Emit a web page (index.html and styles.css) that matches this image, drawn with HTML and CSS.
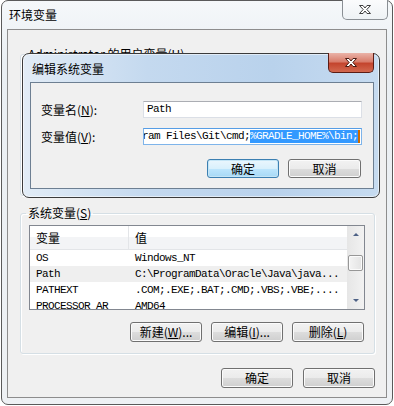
FILE: index.html
```html
<!DOCTYPE html>
<html>
<head>
    <title>环境变量</title>
    <link rel="stylesheet" href="styles.css">
</head>
<body>
    <div class="window">
        <div class="titlebar">
            <span class="title">环境变量</span>
        </div>
        <div class="close close-outer">
            <svg width="12" height="9" viewBox="0 0 12 9"><path d="M0.5 0.5H4L6 3L8 0.5H11.5L7.8 4.5L11.5 8.5H8L6 6L4 8.5H0.5L4.2 4.5Z" fill="#fff" stroke="#404040" stroke-width="1" stroke-linejoin="round"/></svg>
        </div>

        <div class="client">
            <fieldset class="group user-group">
                <legend>Administrator 的用户变量(<u>U</u>)</legend>
            </fieldset>

            <fieldset class="group sys-group">
                <legend>系统变量(<u>S</u>)</legend>
                <div class="listview">
                    <div class="list-main">
                        <div class="list-head">
                            <div class="col1">变量</div>
                            <div class="col2">值</div>
                        </div>
                        <div class="row">
                            <div class="col1">OS</div>
                            <div class="col2">Windows_NT</div>
                        </div>
                        <div class="row selected">
                            <div class="col1">Path</div>
                            <div class="col2">C:\ProgramData\Oracle\Java\java...</div>
                        </div>
                        <div class="row">
                            <div class="col1">PATHEXT</div>
                            <div class="col2">.COM;.EXE;.BAT;.CMD;.VBS;.VBE;....</div>
                        </div>
                        <div class="row">
                            <div class="col1">PROCESSOR_AR</div>
                            <div class="col2">AMD64</div>
                        </div>
                    </div>
                    <div class="vscroll">
                        <div class="sb-btn"><span class="arrow-up"></span></div>
                        <div class="sb-thumb"></div>
                        <div class="sb-btn sb-down"><span class="arrow-down"></span></div>
                    </div>
                </div>
                <div class="btn-row group-buttons">
                    <button class="btn">新建(<u>W</u>)...</button>
                    <button class="btn">编辑(<u>I</u>)...</button>
                    <button class="btn">删除(<u>L</u>)</button>
                </div>
            </fieldset>

            <div class="btn-row main-buttons">
                <button class="btn">确定</button>
                <button class="btn">取消</button>
            </div>
        </div>

        <div class="dialog">
            <div class="dialog-title">编辑系统变量</div>
            <div class="close close-red">
                <svg width="12" height="9" viewBox="0 0 12 9"><path d="M0.5 0.5H4L6 3L8 0.5H11.5L7.8 4.5L11.5 8.5H8L6 6L4 8.5H0.5L4.2 4.5Z" fill="#fff" stroke="#4a1a12" stroke-width="1" stroke-linejoin="round"/></svg>
            </div>
            <div class="dialog-client">
                <div class="field">
                    <label class="field-label">变量名(<u>N</u>):</label>
                    <div class="textbox">
                        <span class="mono">Path</span>
                    </div>
                </div>
                <div class="field">
                    <label class="field-label">变量值(<u>V</u>):</label>
                    <div class="textbox focused">
                        <span class="mono">C:\Program Files\Git\cmd;</span><span class="mono sel">%GRADLE_HOME%\bin;</span><span class="caret"></span>
                    </div>
                </div>
                <div class="btn-row dialog-buttons">
                    <button class="btn default">确定</button>
                    <button class="btn">取消</button>
                </div>
            </div>
        </div>
    </div>
</body>
</html>
```

FILE: styles.css
```css
body {
    margin: 0;
    background: #fff;
    font-family: "Noto Sans CJK SC", "Liberation Sans", sans-serif;
    font-size: 12px;
    color: #000;
}

u {
    text-decoration: underline;
}

.window {
    position: relative;
    box-sizing: border-box;
    width: 392px;
    height: 405px;
    margin-left: 1px;
    padding: 0 5px 6px;
    border: 1px solid #5a5a5a;
    border-radius: 7px;
    background: linear-gradient(#f5f8fa, #eaeff3 60px, #eef1f4);
    display: flex;
    flex-direction: column;
}

.titlebar {
    height: 28px;
    display: flex;
    align-items: center;
}

.title {
    padding-left: 2px;
    line-height: 14px;
}

.close {
    position: absolute;
    box-sizing: border-box;
    width: 46px;
    height: 20px;
    display: flex;
    align-items: center;
    justify-content: center;
    border-radius: 0 0 5px 5px;
}

.close-outer {
    top: -1px;
    right: 4px;
    border: 1px solid #8a8f94;
    border-top: none;
    background: linear-gradient(#fbfcfd, #eef2f5);
}

.close-red {
    top: -1px;
    right: 5px;
    border: 1px solid #5b1c14;
    border-top: none;
    background: linear-gradient(#eab3a8, #d97d6c 45%, #c4452e 55%, #d2684f);
}

.client {
    flex: 1;
    border: 1px solid #8d8d8d;
    background: #f0f0f0;
    padding: 16px 11px 9px 12px;
    display: flex;
    flex-direction: column;
}

.group {
    margin: 0;
    padding: 4px 8px 11px;
    min-width: 0;
    border: 1px solid #d5dfe5;
    border-radius: 3px;
    box-shadow: inset 1px 1px 0 #fff, 1px 1px 0 #fff;
}

.group legend {
    margin-left: -3px;
    padding: 0 2px;
    line-height: 16px;
}

.user-group {
    box-sizing: border-box;
    height: 150px;
    margin-bottom: 9px;
}

.listview {
    box-sizing: border-box;
    width: 336px;
    height: 85px;
    border: 1px solid #828790;
    background: #fff;
    display: flex;
}

.list-main {
    flex: 1;
    overflow: hidden;
}

.list-head {
    display: flex;
    height: 23px;
    align-items: center;
    background: linear-gradient(#fff 0, #fff 50%, #f3f4f6 50%, #f3f4f6 100%);
    border-bottom: 1px solid #e3e5e8;
}

.list-head .col1 {
    align-self: stretch;
    display: flex;
    align-items: center;
    border-right: 1px solid #e3e5e8;
}

.col1 {
    box-sizing: border-box;
    width: 99px;
    padding-left: 6px;
    flex-shrink: 0;
}

.col2 {
    padding-left: 6px;
    white-space: nowrap;
}

.row {
    display: flex;
    height: 16px;
    line-height: 16px;
    font-family: "Liberation Mono", monospace;
    font-size: 11px;
    letter-spacing: -0.6px;
}

.row.selected {
    background: #efefef;
}

.vscroll {
    width: 17px;
    display: flex;
    flex-direction: column;
    background: linear-gradient(90deg, #e6e6e6, #f2f2f2);
}

.sb-btn {
    height: 17px;
    display: flex;
    align-items: center;
    justify-content: center;
}

.sb-down {
    margin-top: auto;
}

.arrow-up,
.arrow-down {
    width: 0;
    height: 0;
    border-left: 3px solid transparent;
    border-right: 3px solid transparent;
}

.arrow-up {
    border-bottom: 3px solid #4d6185;
}

.arrow-down {
    border-top: 3px solid #4d6185;
}

.sb-thumb {
    box-sizing: border-box;
    height: 16px;
    margin: 12px 1px 0;
    border: 1px solid #979797;
    border-radius: 2px;
    background: linear-gradient(90deg, #f4f4f4, #e3e3e3);
    box-shadow: inset 0 0 0 1px #fbfbfb;
}

.btn-row {
    display: flex;
    justify-content: flex-end;
    gap: 9px;
}

.group-buttons {
    margin-top: 12px;
    margin-right: 2px;
}

.main-buttons {
    margin-top: auto;
    gap: 10px;
}

.btn {
    box-sizing: border-box;
    width: 72px;
    height: 20px;
    padding: 0;
    font-family: "Noto Sans CJK SC", "Liberation Sans", sans-serif;
    font-size: 12px;
    line-height: 16px;
    color: #000;
    border: 1px solid #707070;
    border-radius: 3px;
    background: linear-gradient(#f2f2f2 0, #ebebeb 50%, #dddddd 50%, #cfcfcf 100%);
    box-shadow: inset 0 0 0 1px #fbfbfb;
}

.btn.default {
    border-color: #3c7fb1;
    background: linear-gradient(#eaf6fd 0, #d9f0fc 50%, #bee6fd 50%, #a7d9f5 100%);
    box-shadow: inset 0 0 0 1px #c4e5f6;
}

.dialog {
    position: absolute;
    left: 20px;
    top: 52px;
    box-sizing: border-box;
    width: 358px;
    height: 145px;
    padding: 0 5px 8px 7px;
    border: 1px solid #3b3b3b;
    border-radius: 7px;
    background: linear-gradient(90deg, #e2ecf6, #c4d9ef 35%, #b9d2ec 70%, #c6dbf0);
    box-shadow: inset 0 0 0 1px rgba(255, 255, 255, 0.55);
    display: flex;
    flex-direction: column;
}

.dialog-title {
    height: 28px;
    padding-left: 2px;
    display: flex;
    align-items: center;
}

.dialog-client {
    flex: 1;
    border: 1px solid #6d7f92;
    background: #f0f0f0;
    padding: 18px 10px 0 10px;
}

.field {
    display: flex;
    align-items: center;
    height: 17px;
    margin-bottom: 10px;
}

.field-label {
    width: 102px;
}

.textbox {
    box-sizing: border-box;
    width: 219px;
    height: 17px;
    padding: 0 1px 0 3px;
    border: 1px solid #dbdfe6;
    border-top-color: #abadb3;
    background: #fff;
    display: flex;
    align-items: center;
    overflow: hidden;
    white-space: nowrap;
}

.textbox.focused {
    justify-content: flex-end;
    border-color: #7eb4ea;
    border-top-color: #569de5;
}

.mono {
    font-family: "Liberation Mono", monospace;
    font-size: 11px;
    letter-spacing: -0.6px;
    line-height: 13px;
    flex-shrink: 0;
}

.sel {
    background: #3399ff;
    color: #fff;
}

.caret {
    width: 2px;
    height: 13px;
    background: #cc6a00;
    flex-shrink: 0;
}

.dialog-buttons {
    margin-top: 14px;
    margin-right: 2px;
}

.dialog-buttons .btn {
    height: 19px;
    width: 72px;
}

.dialog-buttons .btn + .btn {
    width: 73px;
}
```
